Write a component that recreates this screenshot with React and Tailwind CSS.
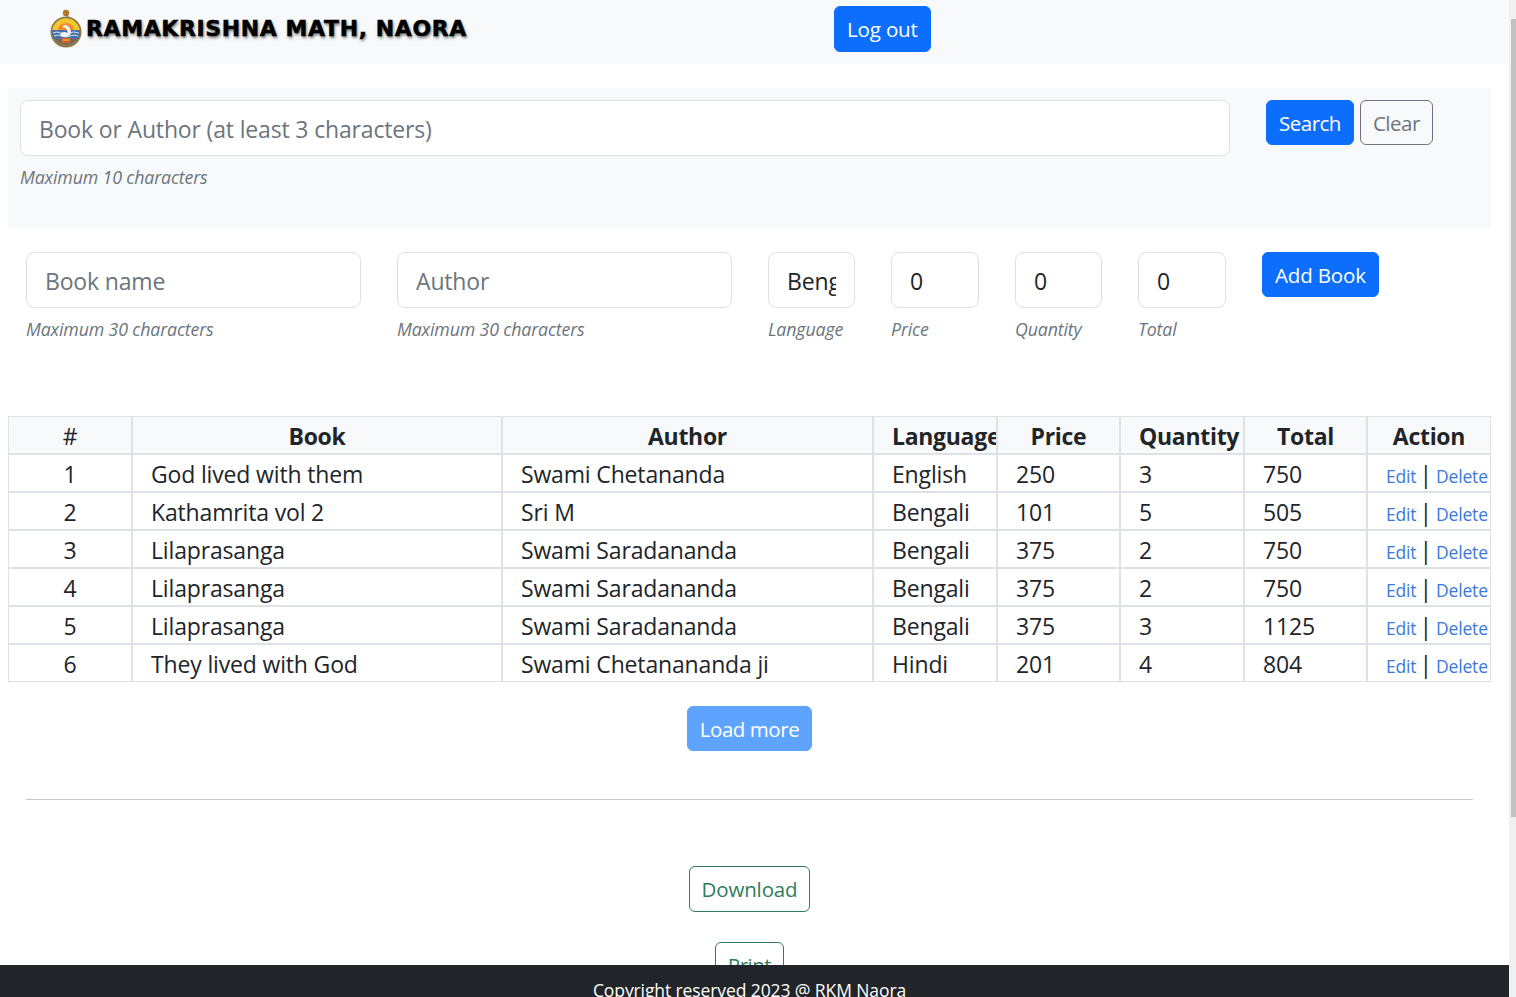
const F = "font-['Open_Sans','Noto_Sans',sans-serif]";

const rows = [
  [1, "God lived with them", "Swami Chetananda", "English", 250, 3, 750],
  [2, "Kathamrita vol 2", "Sri M", "Bengali", 101, 5, 505],
  [3, "Lilaprasanga", "Swami Saradananda", "Bengali", 375, 2, 750],
  [4, "Lilaprasanga", "Swami Saradananda", "Bengali", 375, 2, 750],
  [5, "Lilaprasanga", "Swami Saradananda", "Bengali", 375, 3, 1125],
  [6, "They lived with God", "Swami Chetanananda ji", "Hindi", 201, 4, 804],
];

function Emblem() {
  return (
    <svg width="36" height="40" viewBox="0 0 36 40" className="shrink-0">
      <circle cx="18" cy="5" r="3.2" fill="#b5762a" />
      <path d="M18 7 Q22 9 18 11" stroke="#7a5a2a" strokeWidth="1" fill="none" />
      <circle cx="18" cy="24" r="15.5" fill="#8a7a4a" />
      <path d="M4.2 22 A14 14 0 0 1 31.8 22 Z" fill="#f3c52e" />
      <path d="M10 22 A8 7 0 0 1 26 22 Z" fill="#ef8a2b" />
      <path d="M4 22 H32 A14 14 0 0 1 30 31 H6 A14 14 0 0 1 4 22 Z" fill="#4a6fa8" />
      <path d="M5 25 Q9 23 13 25 T21 25 T31 25 M6 28 Q10 26 14 28 T22 28 T30 28" stroke="#cfe0ef" strokeWidth="1" fill="none" />
      <path d="M12 27 Q14 22 20 25 Q18 18 15 20 Q14 17 18 17 Q23 19 23 25 Q22 29 16 29 Q13 29 12 27 Z" fill="#f5f5f5" />
      <path d="M7 31 H29 A14 14 0 0 1 7 31 Z" fill="#6b6a5a" />
      <path d="M13.5 30 H22.5 V35 H13.5 Z" fill="#dd5a2a" />
      <path d="M14.5 32 H21.5" stroke="#f3c52e" strokeWidth="1" />
    </svg>
  );
}

function Hint({ children, className = "" }) {
  return <div className={`text-[17.8px] leading-[27px] italic text-[#6c757d] whitespace-nowrap ${className}`}>{children}</div>;
}

function Field({ width, placeholder, value, hint }) {
  return (
    <div className={`shrink-0 ${width}`}>
      <div className="h-14 w-full bg-white border border-[#dee2e6] rounded-lg px-[18px] pt-[2px] flex items-center">
        <div className="overflow-hidden whitespace-nowrap w-full">
          {placeholder ? <span className="text-[#6c757d]">{placeholder}</span> : value}
        </div>
      </div>
      <Hint className="mt-2">{hint}</Hint>
    </div>
  );
}

function Btn({ className, children }) {
  return (
    <button className={`rounded-md px-3 pt-px text-[20.5px] leading-none border whitespace-nowrap ${className}`}>{children}</button>
  );
}

const th = "border border-[#dee2e6] bg-[#f8f9fa] p-0 px-[18px] pt-[2px] leading-[34px] tracking-[-0.3px] font-bold text-center overflow-hidden whitespace-nowrap";
const td = "border border-[#dee2e6] p-0 pl-[18px] pt-[2px] leading-[34px] overflow-hidden whitespace-nowrap";

export default function App() {
  return (
    <div className={`${F} relative h-[997px] overflow-hidden flex text-[#212529] text-[23px] tracking-[-0.16px] leading-9 bg-white`}>
      <div className="flex-1 min-w-0">
        <header className="h-16 bg-[#f8f9fa] flex items-start">
          <div className="ml-12 w-[786px] flex items-center pt-2 shrink-0">
            <Emblem />
            <span className="mt-[2px] ml-[2px] font-['DejaVu_Sans',sans-serif] font-bold text-[22px] leading-8 text-black tracking-[0.6px] whitespace-nowrap [text-shadow:1px_2px_3px_rgba(0,0,0,0.55)] [-webkit-text-stroke:0.5px_black]">RAMAKRISHNA MATH, NAORA</span>
          </div>
          <Btn className="mt-[6px] h-[46px] tracking-[-0.15px] bg-[#0d6efd] border-[#0d6efd] text-white">Log out</Btn>
        </header>

        <section className="mt-6 ml-2 w-[1483px] h-[140px] bg-[#f8f9fa] px-3 pt-3 flex items-start">
          <div className="w-[1210px] shrink-0">
            <div className="h-14 bg-white border border-[#dee2e6] rounded-lg pl-[18px] pt-[2px] flex items-center text-[#6c757d] whitespace-nowrap">Book or Author (at least 3 characters)</div>
            <Hint className="mt-2">Maximum 10 characters</Hint>
          </div>
          <Btn className="ml-9 h-[45px] tracking-[-0.5px] bg-[#0d6efd] border-[#0d6efd] text-white">Search</Btn>
          <Btn className="ml-[6px] h-[45px] tracking-[-0.5px] border-[#6c757d] text-[#6c757d]">Clear</Btn>
        </section>

        <section className="mt-6 ml-[26px] flex items-start gap-9">
          <Field width="w-[335px]" placeholder="Book name" hint="Maximum 30 characters" />
          <Field width="w-[335px]" placeholder="Author" hint="Maximum 30 characters" />
          <Field width="w-[87px]" value="Bengali" hint="Language" />
          <Field width="w-[88px]" value="0" hint="Price" />
          <Field width="w-[87px]" value="0" hint="Quantity" />
          <Field width="w-[88px]" value="0" hint="Total" />
          <Btn className="h-[45px] tracking-[-0.15px] bg-[#0d6efd] border-[#0d6efd] text-white">Add Book</Btn>
        </section>

        <table className="mt-[73px] ml-2 w-[1483px] table-fixed border-separate border-spacing-0">
          <colgroup>
            <col className="w-[124px]" />
            <col className="w-[370px]" />
            <col className="w-[371px]" />
            <col className="w-[124px]" />
            <col className="w-[123px]" />
            <col className="w-[124px]" />
            <col className="w-[123px]" />
            <col className="w-[124px]" />
          </colgroup>
          <thead>
            <tr className="h-[38px]">
              <th className={`${th} font-normal`}>#</th>
              <th className={th}>Book</th>
              <th className={th}>Author</th>
              <th className={th}>Language</th>
              <th className={th}>Price</th>
              <th className={th}>Quantity</th>
              <th className={th}>Total</th>
              <th className={th}>Action</th>
            </tr>
          </thead>
          <tbody>
            {rows.map((r) => (
              <tr key={r[0]} className="h-[38px]">
                <td className="border border-[#dee2e6] p-0 pt-[2px] leading-[34px] text-center">{r[0]}</td>
                <td className={td}>{r[1]}</td>
                <td className={td}>{r[2]}</td>
                <td className={td}>{r[3]}</td>
                <td className={td}>{r[4]}</td>
                <td className={td}>{r[5]}</td>
                <td className={td}>{r[6]}</td>
                <td className={td}>
                  <span className="text-[17.5px] leading-none text-[#3b78dc]">Edit</span>
                  <span className="ml-[3px] mr-[4px] leading-none">|</span>
                  <span className="text-[17.5px] leading-none text-[#3b78dc]">Delete</span>
                </td>
              </tr>
            ))}
          </tbody>
        </table>

        <div className="mt-6 flex justify-center pr-[10px]">
          <Btn className="h-[45px] tracking-[-0.45px] bg-[#5ea3fe] border-[#5ea3fe] text-white">Load more</Btn>
        </div>
        <div className="mt-12 ml-[26px] w-[1447px] h-px bg-[#c6c7c8]" />
        <div className="mt-[66px] flex justify-center pr-[10px]">
          <Btn className="h-[46px] tracking-[-0.15px] border-[#2f7d5b] text-[#2f7d5b]">Download</Btn>
        </div>
        <div className="mt-[30px] flex justify-center pr-[10px]">
          <Btn className="h-[46px] tracking-[-0.5px] border-[#2f7d5b] text-[#2f7d5b]">Print</Btn>
        </div>
      </div>

      <div className="w-[7px] shrink-0 bg-[#f0f0f0] pt-[19px] pl-[2px]">
        <div className="h-[798px] bg-[#c1c1c1]" />
      </div>

      <footer className="absolute left-0 right-[7px] top-[965px] h-8 bg-[#212529] text-white text-center text-[17.5px] tracking-[-0.1px] leading-[50px] pr-[10px]">
        Copyright reserved 2023 @ RKM Naora
      </footer>
    </div>
  );
}
